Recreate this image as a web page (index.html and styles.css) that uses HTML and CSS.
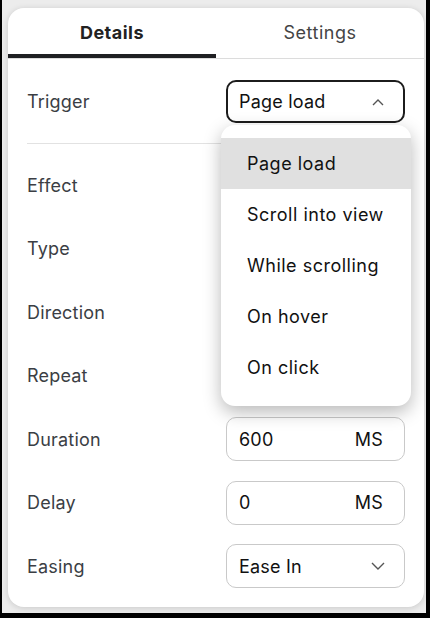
FILE: index.html
```html
<!DOCTYPE html>
<html>
<head>
<meta charset="utf-8">
<link rel="stylesheet" href="styles.css">
</head>
<body>
<div class="frame">
  <div class="card">
    <div class="tabs">
      <div class="tab active">Details</div>
      <div class="tab">Settings</div>
    </div>
    <div class="trigger-row">
      <div class="label">Trigger</div>
      <div class="select-wrap">
        <div class="select open">
          <span class="value">Page load</span>
          <svg class="chev" width="12" height="8" viewBox="0 0 12 8"><path d="M1 7 L6 2 L11 7" fill="none" stroke="#555" stroke-width="1.4"/></svg>
        </div>
        <div class="menu">
          <div class="item selected">Page load</div>
          <div class="item">Scroll into view</div>
          <div class="item">While scrolling</div>
          <div class="item">On hover</div>
          <div class="item">On click</div>
        </div>
      </div>
    </div>
    <div class="rows">
      <div class="row"><div class="label">Effect</div><div class="field"></div></div>
      <div class="row"><div class="label">Type</div><div class="field"></div></div>
      <div class="row"><div class="label">Direction</div><div class="field"></div></div>
      <div class="row"><div class="label">Repeat</div><div class="field"></div></div>
      <div class="row"><div class="label">Duration</div><div class="field box"><span class="value">600</span><span class="unit">MS</span></div></div>
      <div class="row"><div class="label">Delay</div><div class="field box"><span class="value">0</span><span class="unit">MS</span></div></div>
      <div class="row"><div class="label">Easing</div><div class="field box sel"><span class="value">Ease In</span>
        <svg class="chev" width="14" height="8" viewBox="0 0 14 8"><path d="M1 1 L7 7 L13 1" fill="none" stroke="#555" stroke-width="1.4"/></svg></div></div>
    </div>
  </div>
</div>
</body>
</html>
```

FILE: styles.css
```css
html, body {
  margin: 0;
  padding: 0;
  background: #000;
  height: 618px;
  overflow: hidden;
}
body {
  font-family: Inter, Roboto, "Noto Sans", sans-serif;
}
.frame {
  margin: 0 4px 0 2px;
  height: 613px;
  box-sizing: border-box;
  padding: 8px 2px 6px 6px;
  background: #ececec;
}
.card {
  background: #fff;
  border-radius: 16px;
  height: 599px;
  box-shadow: 0 1px 6px rgba(0,0,0,0.15);
  position: relative;
}
.tabs {
  display: flex;
  border-bottom: 1px solid #dcdcdc;
}
.tab {
  flex: 1;
  height: 50px;
  padding-bottom: 2px;
  box-sizing: border-box;
  display: flex;
  align-items: center;
  justify-content: center;
  font-size: 18px;
  letter-spacing: 0.5px;
  color: #444;
}
.tab.active {
  font-weight: 700;
  color: #222;
  box-shadow: inset 0 -4px 0 #1f2023;
}
.trigger-row {
  margin: 0 19px;
  padding: 21px 0 20px;
  border-bottom: 1px solid #e2e2e2;
  display: flex;
  align-items: center;
  justify-content: space-between;
}
.label {
  font-size: 18px;
  letter-spacing: 0.2px;
  color: #3b3e44;
}
.select-wrap {
  position: relative;
  width: 179px;
}
.select {
  height: 43px;
  box-sizing: border-box;
  border: 2px solid #1c1c1c;
  border-radius: 10px;
  display: flex;
  align-items: center;
  justify-content: space-between;
  padding: 0 19px 0 11px;
  font-size: 18px;
  letter-spacing: 0.2px;
  color: #111;
}
.menu {
  position: absolute;
  left: -5px;
  right: -6px;
  top: 45px;
  background: #fff;
  border-radius: 14px;
  padding: 13px 0;
  box-shadow: 0 6px 18px rgba(0,0,0,0.28);
  z-index: 2;
}
.item {
  height: 51px;
  display: flex;
  align-items: center;
  padding-left: 26px;
  font-size: 18px;
  color: #111;
  letter-spacing: 0.5px;
}
.item.selected {
  background: #e0e0e0;
}
.rows {
  padding: 19px 19px 0;
  display: flex;
  flex-direction: column;
  gap: 19.5px;
}
.row {
  height: 44px;
  display: flex;
  align-items: center;
  justify-content: space-between;
}
.field {
  width: 179px;
  height: 44px;
  box-sizing: border-box;
}
.field.box {
  border: 1px solid #c9c9c9;
  border-radius: 10px;
  display: flex;
  align-items: center;
  justify-content: space-between;
  padding: 0 21px 0 12px;
  font-size: 18px;
  letter-spacing: 0.2px;
  color: #111;
}
.field.sel {
  padding-right: 19px;
}
.chev {
  display: block;
}
```
